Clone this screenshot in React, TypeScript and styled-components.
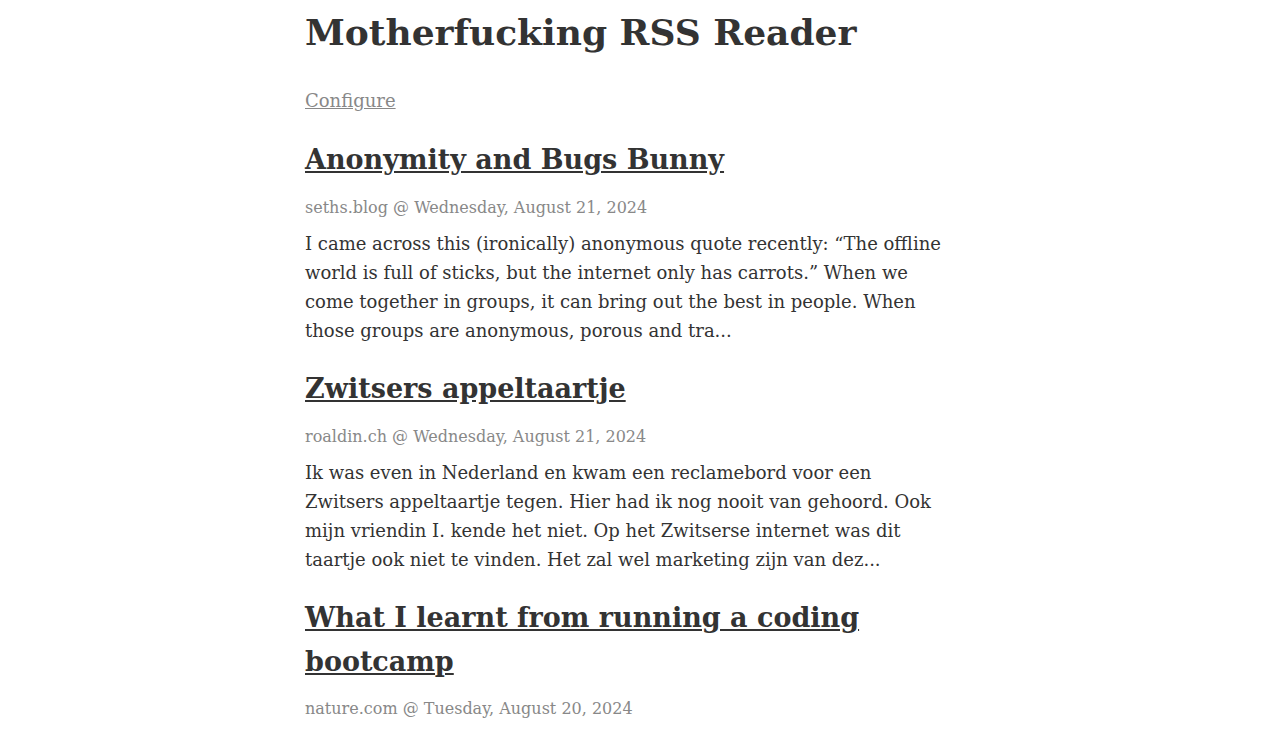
import React from 'react';
import styled, { createGlobalStyle } from 'styled-components';

const GlobalStyle = createGlobalStyle`
  html, body {
    margin: 0;
    padding: 0;
    background: #fff;
  }
  body {
    font-family: "DejaVu Serif", serif;
    color: #333;
  }
`;

const Page = styled.main`
  max-width: 650px;
  margin: 0 auto;
  padding: 4px 12px 40px 10px;
  font-size: 18px;
  line-height: 1.6;
`;

const Title = styled.h1`
  font-size: 36px;
  line-height: 1.6;
  margin: 0 0 25px;
  color: #333;
`;

const ConfigLink = styled.a`
  display: inline-block;
  color: #888;
  text-decoration: underline;
  margin-bottom: 1px;
`;

const Article = styled.article`
  margin-top: 22px;
`;

const ArticleTitle = styled.h2`
  font-size: 27px;
  line-height: 1.6;
  margin: 0 0 13px;

  a {
    color: #333;
    text-decoration: underline;
  }
`;

const Meta = styled.p`
  font-size: 16px;
  line-height: 1.6;
  color: #888;
  margin: 0 0 10px;
`;

const Summary = styled.p`
  margin: 0;
  color: #333;
`;

const items = [
  {
    title: 'Anonymity and Bugs Bunny',
    source: 'seths.blog',
    date: 'Wednesday, August 21, 2024',
    summary:
      'I came across this (ironically) anonymous quote recently: \u201cThe offline world is full of sticks, but the internet only has carrots.\u201d When we come together in groups, it can bring out the best in people. When those groups are anonymous, porous and tra...',
  },
  {
    title: 'Zwitsers appeltaartje',
    source: 'roaldin.ch',
    date: 'Wednesday, August 21, 2024',
    summary:
      'Ik was even in Nederland en kwam een reclamebord voor een Zwitsers appeltaartje tegen. Hier had ik nog nooit van gehoord. Ook mijn vriendin I. kende het niet. Op het Zwitserse internet was dit taartje ook niet te vinden. Het zal wel marketing zijn van dez...',
  },
  {
    title: 'What I learnt from running a coding bootcamp',
    source: 'nature.com',
    date: 'Tuesday, August 20, 2024',
    summary:
      'Teaching people to code taught me a lot about how we learn, what motivates students and why patience matters more than any syllabus...',
  },
];

export default function App() {
  return (
    <>
      <GlobalStyle />
      <Page>
        <Title>Motherfucking RSS Reader</Title>
        <ConfigLink href="#">Configure</ConfigLink>
        {items.map((item) => (
          <Article key={item.title}>
            <ArticleTitle>
              <a href="#">{item.title}</a>
            </ArticleTitle>
            <Meta>
              {item.source} @ {item.date}
            </Meta>
            <Summary>{item.summary}</Summary>
          </Article>
        ))}
      </Page>
    </>
  );
}
